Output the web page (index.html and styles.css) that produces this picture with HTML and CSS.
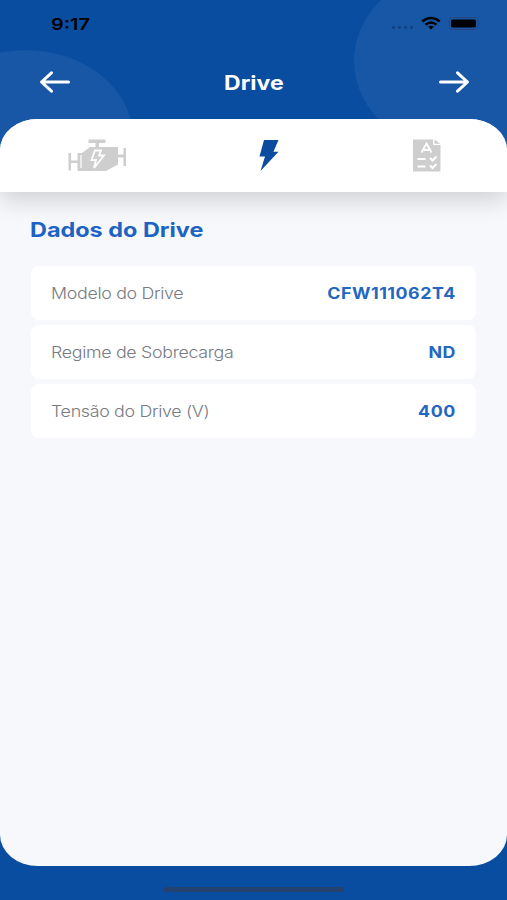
FILE: index.html
```html
<!DOCTYPE html>
<html lang="pt-BR">
<head>
    <meta charset="UTF-8">
    <meta name="viewport" content="width=device-width, initial-scale=1.0">
    <title>Dados do Drive</title>
    <link rel="stylesheet" href="styles.css">
</head>
<body>
    <div class="screen">
        <div class="circle circle-left"></div>
        <div class="circle circle-right"></div>

        <div class="status-bar">
            <span class="time">9:17</span>
            <svg class="status-icons" width="90" height="16" viewBox="0 0 90 16">
                <g fill="#123e7d">
                    <circle cx="3.5" cy="11.5" r="1.4"/>
                    <circle cx="9.5" cy="11.5" r="1.4"/>
                    <circle cx="15.5" cy="11.5" r="1.4"/>
                    <circle cx="21.5" cy="11.5" r="1.4"/>
                </g>
                <g fill="none" stroke="#000" stroke-width="2.4">
                    <path d="M32.2 5.5Q41 -1.4 49.8 5.5"/>
                    <path d="M35.5 8.8Q41 4.4 46.5 8.8"/>
                </g>
                <path d="M38.2 10.8Q41 8.8 43.8 10.8L41 13.4Z"/>
                <rect x="59" y="1.5" width="29" height="12" rx="3.5" fill="none" stroke="#2a4679"/>
                <rect x="61" y="3.5" width="25" height="8" rx="1.8"/>
                <path d="M89 5.5q1.5 2 0 4z" fill="#2a4679"/>
            </svg>
        </div>

        <header class="header">
            <svg class="arrow" width="32" height="24" viewBox="0 0 32 24">
                <path d="M29.5 12H3M12.5 2.8L2.5 12L12.5 21.2"/>
            </svg>
            <h1>Drive</h1>
            <svg class="arrow" width="32" height="24" viewBox="0 0 32 24">
                <path d="M2.5 12H29M19.5 2.8L29.5 12L19.5 21.2"/>
            </svg>
        </header>

        <main class="panel">
            <nav class="tabs">
                <!-- motor -->
                <svg width="60" height="34" viewBox="0 0 60 34">
                    <g fill="#cecece">
                        <rect x="20.5" y="0.5" width="17" height="3.5" rx="1"/>
                        <rect x="27.5" y="3" width="3.5" height="5"/>
                        <path d="M9.5 14H14L22 8H50V25.5L38 32H9.5Z"/>
                        <path d="M0.5 14H3V21.5H10V24H3V31.5H0.5ZM50 15.5H55.5V9H58V27H55.5V18.5H50Z"/>
                    </g>
                    <path d="M13 16V29" stroke="#fff" stroke-width="1.2"/>
                    <path d="M27 11.5H33L31 16.5H36L26 29L28 21H23.5Z" fill="none" stroke="#fff" stroke-width="1.8"/>
                </svg>
                <!-- drive -->
                <svg width="22" height="34" viewBox="0 0 22 34">
                    <path d="M5 1H19.5L14.500 12.8H19.5L1.500 32L6 17.5H0.5Z" fill="#0b4c9f"/>
                </svg>
                <!-- checklist -->
                <svg width="30" height="34" viewBox="0 0 30 34">
                    <path d="M1 0.5H21V6H28.5V32.5H1Z" fill="#cecece"/>
                    <path d="M22.5 0.5L28.5 4.8H22.5Z" fill="#cecece"/>
                    <g fill="none" stroke="#fff" stroke-width="2">
                        <path d="M9.5 13.5L14.5 4.5L19.5 13.5M11.5 11H17.5"/>
                        <path d="M5.5 20H13.5M5.5 27.5H13.5"/>
                        <path d="M18 19L20.5 21.5L24.5 17.5M18 26.5L20.5 29L24.5 25"/>
                    </g>
                </svg>
            </nav>

            <section class="content">
                <h2>Dados do Drive</h2>
                <dl class="list">
                    <div class="row">
                        <dt>Modelo do Drive</dt>
                        <dd>CFW111062T4</dd>
                    </div>
                    <div class="row">
                        <dt>Regime de Sobrecarga</dt>
                        <dd>ND</dd>
                    </div>
                    <div class="row">
                        <dt>Tensão do Drive (V)</dt>
                        <dd>400</dd>
                    </div>
                </dl>
            </section>
        </main>

        <div class="home-indicator"></div>
    </div>
</body>
</html>
```
FILE: styles.css
```css
* {
    box-sizing: border-box;
}

body {
    margin: 0;
    font-family: Inter, "Liberation Sans", sans-serif;
}

.screen {
    position: relative;
    height: 900px;
    overflow: hidden;
    background: #094da0;
    display: flex;
    flex-direction: column;
}

/* background decoration */
.circle {
    position: absolute;
    border-radius: 50%;
    background: #1757a6;
}

.circle-left {
    left: -81px;
    top: 50px;
    width: 214px;
    height: 176px;
}

.circle-right {
    left: 354px;
    top: -33px;
    width: 226px;
    height: 188px;
}

.status-bar,
.header,
.panel {
    position: relative;
}

.status-bar {
    height: 47px;
    padding: 0 27px 0 51px;
    display: flex;
    justify-content: space-between;
    align-items: center;
}

.time {
    font-size: 16px;
    font-weight: 600;
    transform: scaleX(1.24);
    transform-origin: left;
}

.header {
    height: 72px;
    padding: 0 37px 2px 39px;
    display: flex;
    justify-content: space-between;
    align-items: center;
}

.arrow {
    fill: none;
    stroke: #fff;
    stroke-width: 3;
    stroke-linecap: round;
    stroke-linejoin: round;
}

h1 {
    margin: 2px 2px 0 0;
    color: #fff;
    font-size: 20px;
    font-weight: 700;
    transform: scaleX(1.15);
}

.panel {
    height: 747px;
    background: #f6f8fc;
    border-radius: 38px / 31px;
    overflow: hidden;
}

.tabs {
    height: 73px;
    padding: 0 65px 0 68px;
    background: #fff;
    box-shadow: 0 8px 22px rgba(0, 0, 0, 0.16);
    display: flex;
    justify-content: space-between;
    align-items: center;
}

.content {
    padding: 26px 31px 0 30px;
}

h2 {
    margin: 0;
    color: #1c63c4;
    font-size: 20px;
    line-height: 24px;
    font-weight: 700;
    width: max-content;
    transform: scaleX(1.17);
    transform-origin: left;
}

.list {
    margin: 24px 0 0 1px;
    display: flex;
    flex-direction: column;
    gap: 5px;
}

.row {
    height: 54px;
    padding: 0 20px;
    background: #fff;
    border-radius: 8px;
    display: flex;
    justify-content: space-between;
    align-items: center;
}

dt {
    color: #777b82;
    font-size: 15.5px;
    font-weight: 300;
    letter-spacing: -0.28px;
    transform: scaleX(1.15);
    transform-origin: left;
}

dd {
    margin: 0;
    color: #2367c0;
    font-size: 15.5px;
    font-weight: 700;
    letter-spacing: 0.45px;
    transform: scaleX(1.15);
    transform-origin: right;
}

.home-indicator {
    width: 181px;
    height: 5px;
    margin: 21px auto 0;
    border-radius: 3px;
    background: #25426f;
}
```
